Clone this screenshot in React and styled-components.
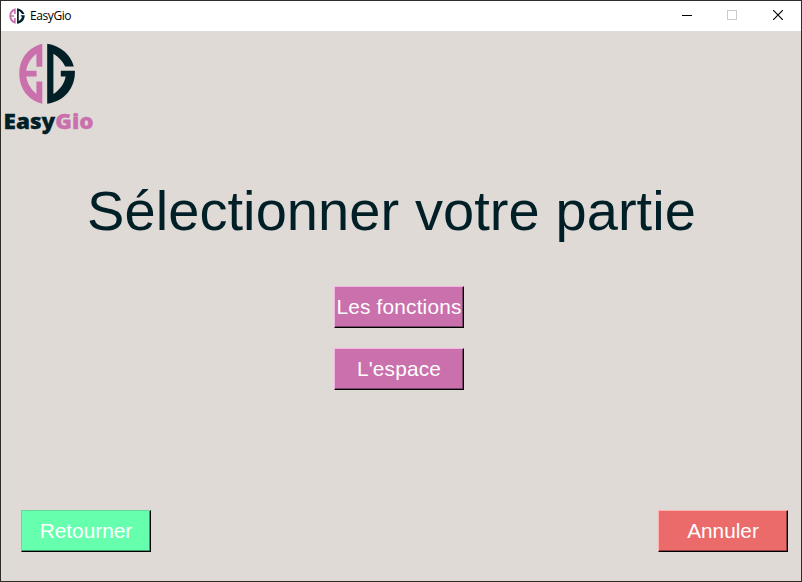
import React from "react";
import styled, { createGlobalStyle } from "styled-components";

const GlobalStyle = createGlobalStyle`
  *, *::before, *::after { box-sizing: border-box; }
  body { margin: 0; background: #2e3028; overflow: hidden; }
`;

const Window = styled.div`
  display: flex;
  flex-direction: column;
  width: 802px;
  height: 582px;
  border: 1px solid #2b2d26;
  background: #dfdad6;
  font-family: "Liberation Sans", Arial, sans-serif;
`;

const TitleBar = styled.header`
  display: flex;
  align-items: center;
  flex: none;
  height: 30px;
  padding-left: 8px;
  background: #fff;
`;

const TitleText = styled.span`
  flex: 1;
  margin-left: 5px;
  font: 12px/16px "Open Sans", "Noto Sans", sans-serif;
  letter-spacing: -0.42px;
  color: #000;
`;

const WindowControl = styled.button`
  display: grid;
  place-items: center;
  width: ${(p) => p.$width || 46}px;
  height: 30px;
  margin: 0;
  padding: 0 0 2px;
  border: 0;
  background: none;
  color: ${(p) => (p.disabled ? "#ccc" : "#000")};
`;

const Content = styled.main`
  display: flex;
  flex-direction: column;
  flex: 1;
`;

const Logo = styled.svg`
  display: block;
  flex: none;
  width: 100px;
  height: 109px;
`;

const Heading = styled.h1`
  margin: 39px 0 0 86px;
  height: 64px;
  font-size: 56px;
  line-height: 64px;
  font-weight: 400;
  letter-spacing: 0.08px;
  white-space: nowrap;
  color: #001f27;
`;

const Choices = styled.div`
  display: flex;
  flex-direction: column;
  gap: 20px;
  margin: 43px 0 0 333px;
`;

const Footer = styled.footer`
  display: flex;
  justify-content: space-between;
  margin-top: auto;
  padding: 0 13px 29px 20px;
`;

const tones = {
  pink: { face: "#c970ad", light: "#f3b5e4", shade: "#79436a" },
  green: { face: "#66ffad", light: "#65d99c", shade: "#3a9968" },
  red: { face: "#eb6b6b", light: "#ffb0b0", shade: "#8d4040" },
};

const RaisedButton = styled.button`
  width: 130px;
  height: 42px;
  margin: 0;
  padding: 0;
  border: 1px solid;
  border-color: ${(p) => tones[p.$tone].light} #000 #000 ${(p) => tones[p.$tone].light};
  box-shadow: inset -1px -1px 0 ${(p) => tones[p.$tone].shade};
  background: ${(p) => tones[p.$tone].face};
  color: #fff;
  font: 20.8px/40px "Liberation Sans", Arial, sans-serif;
  letter-spacing: ${(p) => p.$tracking ?? 0.2}px;
  white-space: nowrap;
`;

function Emblem() {
  return (
    <>
      <path
        fill="#c970ad"
        d="M42.3 43.8C28 47.5 19.3 59 19.3 73.8S28 100.1 42.3 103.8V81.5H36.4V94C31.5 89.7 27.2 84 26.3 76.6H36.6V70.7H26.2C27.2 64 31 58.2 36.4 53.8V66.7H42.3Z"
      />
      <path
        fill="#001f27"
        d="M47.2 43.8C60.5 46 70.6 54.2 73.8 66.4H65.2C62.5 61 58.5 57 53.4 53.8V94C59.7 89.6 64.4 83.8 65.6 76.4H60.8V70.7H74.9C75.5 87.5 64.7 101.2 47.2 103.8Z"
      />
    </>
  );
}

export default function App() {
  return (
    <>
      <GlobalStyle />
      <Window>
        <TitleBar>
          <svg width="16" height="16" viewBox="18 43 58 62" preserveAspectRatio="none">
            <Emblem />
          </svg>
          <TitleText>EasyGio</TitleText>
          <WindowControl aria-label="Réduire" $width={44}>
            <svg width="10" height="10" shapeRendering="crispEdges">
              <path d="M0 5.5H10" stroke="currentColor" />
            </svg>
          </WindowControl>
          <WindowControl aria-label="Agrandir" disabled>
            <svg width="10" height="10">
              <rect x=".5" y=".5" width="9" height="9" fill="none" stroke="currentColor" />
            </svg>
          </WindowControl>
          <WindowControl aria-label="Fermer">
            <svg width="10" height="10">
              <path d="M0 0L10 10M10 0L0 10" stroke="currentColor" strokeWidth="1.15" />
            </svg>
          </WindowControl>
        </TitleBar>
        <Content>
          <Logo viewBox="1 31 100 109">
            <Emblem />
            <text
              x="3.6"
              y="128.6"
              fontFamily="'Open Sans', sans-serif"
              fontWeight="800"
              fontSize="20.5"
              textLength="90"
              lengthAdjust="spacingAndGlyphs"
              fill="#001f27"
              stroke="#001f27"
              strokeWidth="0.3"
            >
              Easy<tspan fill="#c970ad" stroke="#c970ad">Gio</tspan>
            </text>
          </Logo>
          <Heading>Sélectionner votre partie</Heading>
          <Choices>
            <RaisedButton $tone="pink">Les fonctions</RaisedButton>
            <RaisedButton $tone="pink">L'espace</RaisedButton>
          </Choices>
          <Footer>
            <RaisedButton $tone="green" $tracking={0}>Retourner</RaisedButton>
            <RaisedButton $tone="red" $tracking={0}>Annuler</RaisedButton>
          </Footer>
        </Content>
      </Window>
    </>
  );
}
